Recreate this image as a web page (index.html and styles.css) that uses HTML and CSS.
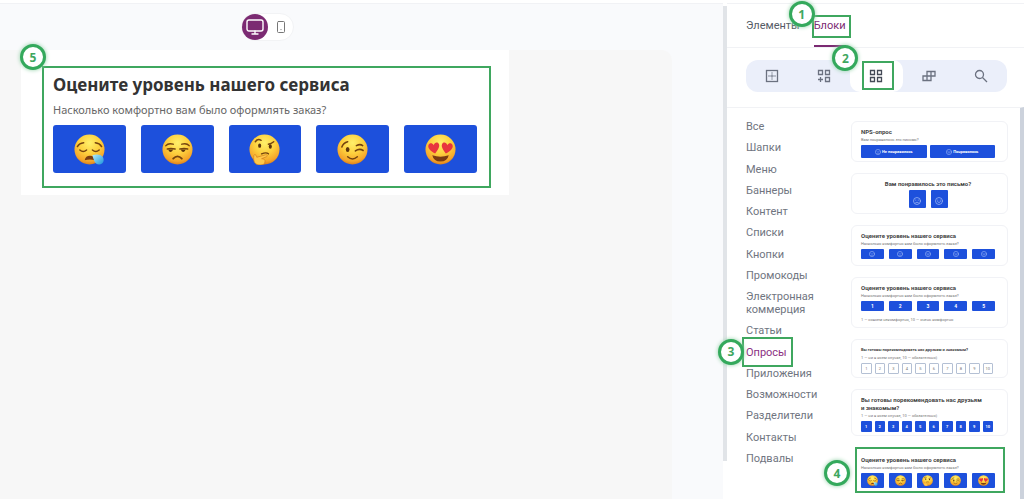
FILE: index.html
```html
<!DOCTYPE html>
<html lang="ru">
<head>
    <meta charset="UTF-8">
    <meta name="viewport" content="width=device-width, initial-scale=1.0">
    <title>Редактор писем</title>
    <link rel="stylesheet" href="styles.css">
</head>
<body>
    <svg class="sprite" width="0" height="0" aria-hidden="true">
        <defs>
            <radialGradient id="skin" cx="50%" cy="28%" r="72%">
                <stop offset="0" stop-color="#fff06a"/>
                <stop offset="0.5" stop-color="#fdcf3d"/>
                <stop offset="0.85" stop-color="#f5a52a"/>
                <stop offset="1" stop-color="#dc7f1c"/>
            </radialGradient>
            <linearGradient id="drop" x1="0" y1="0" x2="1" y2="1">
                <stop offset="0" stop-color="#b4ecfa"/>
                <stop offset="1" stop-color="#1b94dc"/>
            </linearGradient>
            <symbol id="sleepy" viewBox="0 0 32 32">
                <circle cx="16" cy="16" r="15.500" fill="url(#skin)"/>
                <g fill="none" stroke="#74430f" stroke-width="1.500" stroke-linecap="round">
                    <path d="M3.500 13q2-3.500 6.500-4M22 9q4.500.5 6.500 4"/>
                    <path d="M6 16.500q3.500 3 7 0M19 16.500q3.500 3 7 0"/>
                </g>
                <path d="M11 27q1-4.500 5.500-4.500t5 4.500q-5-1.500-10.500 0z" fill="#7a3c12"/>
                <path d="M19 22c4-1.500 8.500-1 10.500 1.500 2.500 3.500.5 8-3.500 8-4.500 0-5.500-4.500-7-9.500z" fill="url(#drop)"/>
            </symbol>
            <symbol id="unamused" viewBox="0 0 32 32">
                <circle cx="16" cy="16" r="15.500" fill="url(#skin)"/>
                <g fill="none" stroke="#74430f" stroke-width="1.500" stroke-linecap="round">
                    <path d="M4 12q2.500-3 7.500-1.500M20.500 10.500q5-1.500 7.500 1.500"/>
                    <path d="M5.500 15.500q3.500-1 8 0M18.500 15.500q4.500-1 8 0"/>
                    <path d="M11.500 25.500q4.500-5 9 0" stroke-width="1.800"/>
                </g>
                <path d="M6.500 16h5q-1 2.800-2.800 2.500T6.500 16zM19.500 16h5q-1 2.800-2.800 2.500T19.500 16z" fill="#5c340d"/>
            </symbol>
            <symbol id="thinking" viewBox="0 0 32 32">
                <circle cx="16" cy="16" r="15.500" fill="url(#skin)"/>
                <g fill="none" stroke="#74430f" stroke-width="1.500" stroke-linecap="round">
                    <path d="M6.500 8q2.500-3.500 6-1.500M20 10.500q3-.5 5.500-2.500"/>
                    <path d="M13 20.500q5-2 7 0"/>
                </g>
                <ellipse cx="11" cy="12" rx="1.600" ry="2.300" fill="#5c340d"/>
                <ellipse cx="22" cy="13" rx="1.600" ry="2.300" fill="#5c340d"/>
                <path d="M5 22c1-1.500 2.500-.5 3 2l9-2.500c2-.5 2.500 1.500 1 2l-5 2c2.500 0 4 1 3.500 3.500-.4 2-2 3-5 3-5 0-7.500-3-6.500-10z" fill="#ffc84a" stroke="#d58420" stroke-width="0.800"/>
            </symbol>
            <symbol id="wink" viewBox="0 0 32 32">
                <circle cx="16" cy="16" r="15.500" fill="url(#skin)"/>
                <g fill="none" stroke="#74430f" stroke-width="1.600" stroke-linecap="round">
                    <path d="M5 13.500q1.500-4.500 6-5.500M20 12q4-2 6.500 0"/>
                    <path d="M19 17.500q4-3 8-.5"/>
                    <path d="M11 23.500q5 4.500 10 0"/>
                </g>
                <ellipse cx="11" cy="16" rx="1.900" ry="2.700" fill="#5c340d"/>
            </symbol>
            <symbol id="love" viewBox="0 0 32 32">
                <circle cx="16" cy="16" r="15.500" fill="url(#skin)"/>
                <g fill="#e8353e">
                    <path d="M10.500 20C6 18 2.500 14.500 3.500 11.500c1-2.500 4-2.500 5.500 0 .8-3 4-3.500 5.300-1.200 1.400 2.700-1.300 6.700-3.800 9.700z"/>
                    <path d="M21.500 20c4.500-2 8-5.500 7-8.500-1-2.500-4-2.500-5.500 0-.8-3-4-3.500-5.300-1.200-1.400 2.700 1.300 6.700 3.800 9.700z"/>
                </g>
                <path d="M7.500 22q8.500 3 17 0-1.500 6.500-8.500 6.500T7.500 22z" fill="#7a3c12"/>
            </symbol>
            <symbol id="smile" viewBox="0 0 16 16">
                <g fill="none" stroke="#a9c0f7" stroke-width="1.400" stroke-linecap="round">
                    <circle cx="8" cy="8" r="7"/>
                    <path d="M5 9.500q3 4 6 0M5.500 6v.5M10.500 6v.5"/>
                </g>
            </symbol>
            <symbol id="sad" viewBox="0 0 16 16">
                <g fill="none" stroke="#a9c0f7" stroke-width="1.400" stroke-linecap="round">
                    <circle cx="8" cy="8" r="7"/>
                    <path d="M5 11.500q3-3 6 0M5.500 6v.5M10.500 6v.5"/>
                </g>
            </symbol>
        </defs>
    </svg>

    <div class="app">
        <main class="workspace">
            <div class="toolbar">
                <div class="devices">
                    <button class="device active" type="button" aria-label="Компьютер">
                        <svg width="18" height="18" viewBox="0 0 18 18" fill="none" stroke="currentColor" stroke-width="1.400" stroke-linecap="round" stroke-linejoin="round"><rect x="1" y="2" width="16" height="11" rx="2"/><path d="M9 13v3M6 16h6"/></svg>
                    </button>
                    <button class="device" type="button" aria-label="Телефон">
                        <svg width="12" height="12" viewBox="0 0 12 12" fill="none" stroke="currentColor" stroke-linecap="round"><rect x="2.500" y="0.500" width="7" height="11" rx="1"/><path d="M6 8.500v.2"/></svg>
                    </button>
                </div>
            </div>
            <div class="canvas">
                <section class="letter">
                    <div class="survey marked">
                        <span class="badge badge-5">5</span>
                        <h1>Оцените уровень нашего сервиса</h1>
                        <p>Насколько комфортно вам было оформлять заказ?</p>
                        <div class="rates">
                            <button type="button" aria-label="Ужасно"><svg><use href="#sleepy"/></svg></button>
                            <button type="button" aria-label="Плохо"><svg><use href="#unamused"/></svg></button>
                            <button type="button" aria-label="Нормально"><svg><use href="#thinking"/></svg></button>
                            <button type="button" aria-label="Хорошо"><svg><use href="#wink"/></svg></button>
                            <button type="button" aria-label="Отлично"><svg><use href="#love"/></svg></button>
                        </div>
                    </div>
                </section>
            </div>
        </main>
        <div class="scrollbar"></div>

        <aside class="sidebar">
            <nav class="tabs">
                <a href="#elements">Элементы</a>
                <a class="active" href="#blocks">Блоки<span class="mark"></span><span class="badge badge-1">1</span></a>
            </nav>
            <div class="kinds">
                <button type="button" aria-label="Структуры">
                    <svg viewBox="0 0 14 14"><rect x="1.500" y="1.500" width="11" height="11"/><path d="M7 3.500v7M3.500 7h7" stroke-dasharray="1 1"/></svg>
                </button>
                <button type="button" aria-label="Добавить блок">
                    <svg viewBox="0 0 14 14"><path d="M1.500 1.500h4v4h-4zM8.500 1.500h4v4h-4zM8.500 8.500h4v4h-4zM3.500 8v5M1 10.500h5"/></svg>
                </button>
                <button class="active" type="button" aria-label="Готовые блоки">
                    <svg viewBox="0 0 14 14"><path d="M1.500 1.500h4v4h-4zM8.500 1.500h4v4h-4zM8.500 8.500h4v4h-4zM1.500 8.500h4v4h-4z"/></svg>
                    <span class="mark"></span><span class="badge badge-2">2</span>
                </button>
                <button type="button" aria-label="Модули">
                    <svg viewBox="0 0 14 14"><path d="M5 2.500h8v4.500H5zM1 7h8v4.500H1zM9 2.500V7M5 7v4.500"/></svg>
                </button>
                <button type="button" aria-label="Поиск">
                    <svg viewBox="0 0 14 14"><circle cx="5.500" cy="5.500" r="4"/><path d="M8.500 8.500l4.500 4.500"/></svg>
                </button>
            </div>

            <div class="library">
                <nav class="categories">
                    <a href="#all">Все</a>
                    <a href="#headers">Шапки</a>
                    <a href="#menu">Меню</a>
                    <a href="#banners">Баннеры</a>
                    <a href="#content">Контент</a>
                    <a href="#lists">Списки</a>
                    <a href="#buttons">Кнопки</a>
                    <a href="#promo">Промокоды</a>
                    <a href="#shop">Электронная коммерция</a>
                    <a href="#articles">Статьи</a>
                    <a class="active" href="#surveys">Опросы<span class="mark"></span><span class="badge badge-3">3</span></a>
                    <a href="#apps">Приложения</a>
                    <a href="#features">Возможности</a>
                    <a href="#dividers">Разделители</a>
                    <a href="#contacts">Контакты</a>
                    <a href="#footers">Подвалы</a>
                </nav>

                <div class="previews">
                    <article class="preview tight">
                        <h2>NPS-опрос</h2>
                        <p>Вам понравилось это письмо?</p>
                        <div class="row tall">
                            <button type="button"><svg><use href="#sad"/></svg>Не понравилось</button>
                            <button type="button"><svg><use href="#smile"/></svg>Понравилось</button>
                        </div>
                    </article>
                    <article class="preview centered">
                        <h2>Вам понравилось это письмо?</h2>
                        <div class="row pair">
                            <button type="button" aria-label="Нет"><svg><use href="#sad"/></svg></button>
                            <button type="button" aria-label="Да"><svg><use href="#smile"/></svg></button>
                        </div>
                    </article>
                    <article class="preview">
                        <h2>Оцените уровень нашего сервиса</h2>
                        <p>Насколько комфортно вам было оформлять заказ?</p>
                        <div class="row five">
                            <button type="button" aria-label="1"><svg><use href="#sad"/></svg></button>
                            <button type="button" aria-label="2"><svg><use href="#sad"/></svg></button>
                            <button type="button" aria-label="3"><svg><use href="#smile"/></svg></button>
                            <button type="button" aria-label="4"><svg><use href="#smile"/></svg></button>
                            <button type="button" aria-label="5"><svg><use href="#smile"/></svg></button>
                        </div>
                    </article>
                    <article class="preview tight">
                        <h2>Оцените уровень нашего сервиса</h2>
                        <p>Насколько комфортно вам было оформлять заказ?</p>
                        <div class="row five">
                            <button type="button">1</button>
                            <button type="button">2</button>
                            <button type="button">3</button>
                            <button type="button">4</button>
                            <button type="button">5</button>
                        </div>
                        <p class="note">1 — совсем некомфортно, 10 — очень комфортно</p>
                    </article>
                    <article class="preview small tight">
                        <h2>Вы готовы порекомендовать нас друзьям и знакомым?</h2>
                        <p>1 — ни в коем случае, 10 — обязательно)</p>
                        <div class="row ten light">
                            <button type="button">1</button>
                            <button type="button">2</button>
                            <button type="button">3</button>
                            <button type="button">4</button>
                            <button type="button">5</button>
                            <button type="button">6</button>
                            <button type="button">7</button>
                            <button type="button">8</button>
                            <button type="button">9</button>
                            <button type="button">10</button>
                        </div>
                    </article>
                    <article class="preview tight">
                        <h2>Вы готовы порекомендовать нас друзьям<br>и знакомым?</h2>
                        <p>1 — ни в коем случае, 10 — обязательно)</p>
                        <div class="row ten">
                            <button type="button">1</button>
                            <button type="button">2</button>
                            <button type="button">3</button>
                            <button type="button">4</button>
                            <button type="button">5</button>
                            <button type="button">6</button>
                            <button type="button">7</button>
                            <button type="button">8</button>
                            <button type="button">9</button>
                            <button type="button">10</button>
                        </div>
                    </article>
                    <article class="preview chosen">
                        <span class="mark"></span><span class="badge badge-4">4</span>
                        <h2>Оцените уровень нашего сервиса</h2>
                        <p>Насколько комфортно вам было оформлять заказ?</p>
                        <div class="row five emoji">
                            <button type="button" aria-label="Ужасно"><svg><use href="#sleepy"/></svg></button>
                            <button type="button" aria-label="Плохо"><svg><use href="#unamused"/></svg></button>
                            <button type="button" aria-label="Нормально"><svg><use href="#thinking"/></svg></button>
                            <button type="button" aria-label="Хорошо"><svg><use href="#wink"/></svg></button>
                            <button type="button" aria-label="Отлично"><svg><use href="#love"/></svg></button>
                        </div>
                    </article>
                </div>
            </div>
        </aside>
    </div>
</body>
</html>
```
FILE: styles.css
```css
* {
    box-sizing: border-box;
}
body {
    margin: 0;
    font-family: Roboto, "Liberation Sans", sans-serif;
    background-color: #fff;
}
h1, h2, p {
    margin: 0;
}
a {
    color: inherit;
    text-decoration: none;
}
button {
    padding: 0;
    border: none;
    font-family: inherit;
    cursor: pointer;
}
.sprite {
    display: block;
}
.app {
    display: flex;
    min-height: 100vh;
    padding-top: 3px;
}

/* left part */
.workspace {
    flex: 1;
    display: flex;
    flex-direction: column;
    background-color: #f9fafc;
    border-top: 1px solid #f1f2f5;
}
.scrollbar {
    width: 4px;
    margin: 3px 0 38px;
    background-color: #e1e4e8;
}
.toolbar {
    display: flex;
    justify-content: center;
    padding: 9px 0;
    padding-right: 188px;
}
.devices {
    display: flex;
    align-items: center;
    background-color: #fff;
    border: 1px solid #f2f3f5;
    border-radius: 14px;
}
.device {
    display: flex;
    align-items: center;
    justify-content: center;
    width: 25px;
    height: 26px;
    border-radius: 50%;
    background-color: transparent;
    color: #777;
}
.device.active {
    width: 26px;
    background-color: #7b2a72;
    color: #fff;
}
.canvas {
    flex: 1;
    margin-right: 51px;
    padding-left: 21px;
    background-color: #f7f7f7;
    border-radius: 0 10px 0 0;
}
.letter {
    max-width: 488px;
    padding: 16px 18px 7px 21px;
    background-color: #fff;
}
.survey {
    padding: 4px 12px 13px 9px;
    font-family: "Noto Sans", "Open Sans", sans-serif;
}
.survey h1 {
    font-size: 17px;
    line-height: 26px;
    color: #333;
}
.survey p {
    margin-bottom: 4px;
    font-size: 11px;
    line-height: 23px;
    color: #666;
}
.rates {
    display: grid;
    grid-template-columns: repeat(5, 1fr);
    gap: 15px;
}
.rates button {
    display: flex;
    align-items: center;
    justify-content: center;
    height: 48px;
    border-radius: 3px;
    background-color: #1d50dc;
}
.rates svg {
    width: 31px;
    height: 31px;
}

/* green marks with numbers */
.marked {
    position: relative;
    border: 2px solid #3fa75f;
}
.mark {
    position: absolute;
    border: 2px solid #3fa75f;
}
.badge {
    position: absolute;
    z-index: 2;
    display: flex;
    align-items: center;
    justify-content: center;
    width: 26px;
    height: 26px;
    border: 3px solid #34a95c;
    border-radius: 50%;
    background-color: #fff;
    box-shadow: 0 0 4px #8fd0a4;
    color: #3fa75f;
    font: bold 12px "Open Sans", sans-serif;
}
.badge-1 {
    top: -3px;
    left: -25px;
}
.badge-2 {
    top: -15px;
    left: -18px;
}
.badge-3 {
    top: -7px;
    left: -28px;
}
.badge-4 {
    top: 12px;
    left: -28px;
}
.badge-5 {
    top: -24px;
    left: -24px;
}

/* right panel */
.sidebar {
    flex: 0 0 297px;
    display: flex;
    flex-direction: column;
    border-top: 1px solid #f1f2f5;
}
.tabs {
    display: flex;
    gap: 14px;
    padding: 0 19px;
    border-bottom: 1px solid #f1f2f5;
    font-size: 11px;
    color: #555b66;
}
.tabs a {
    position: relative;
    padding: 14px 0 11px;
    line-height: 16px;
    border-bottom: 2px solid transparent;
}
.tabs .active {
    color: #7b2a72;
    border-bottom-color: #7b2a72;
}
.tabs .mark {
    top: 11px;
    right: -5px;
    bottom: 7px;
    left: -2px;
}
.kinds {
    display: grid;
    grid-template-columns: repeat(5, 1fr);
    margin: 12px 17px 15px 19px;
    border-radius: 12px;
    background-color: #ebeffa;
}
.kinds button {
    position: relative;
    display: flex;
    align-items: center;
    justify-content: center;
    height: 32px;
    border-radius: 10px;
    background-color: transparent;
    color: #6b7180;
}
.kinds .active {
    background-color: #fff;
    color: #444a56;
}
.kinds svg {
    width: 14px;
    height: 14px;
    fill: none;
    stroke: currentColor;
    stroke-width: 1.3;
}
.kinds .mark {
    top: 1px;
    right: 9px;
    bottom: 2px;
    left: 12px;
}
.library {
    flex: 1;
    display: flex;
    justify-content: space-between;
    padding: 12px 12px 5px 19px;
    border-top: 1px solid #f1f2f5;
    border-right: 4px solid #ccd2dc;
}
.categories {
    display: flex;
    flex-direction: column;
    justify-content: space-between;
    align-items: flex-start;
    width: 80px;
    padding-bottom: 29px;
    font-size: 11px;
    line-height: 13px;
    color: #70757f;
}
.categories a {
    position: relative;
}
.categories .active {
    color: #8b2f82;
}
.categories .mark {
    top: -9px;
    right: -6px;
    bottom: -8px;
    left: -4px;
}
.previews {
    display: flex;
    flex-direction: column;
    gap: 11px;
    width: 157px;
    padding-top: 1px;
}
.preview {
    position: relative;
    padding: 6px 12px 6px 9px;
    border: 1px solid #f1f2f6;
    border-radius: 6px;
}
.preview h2 {
    font-size: 6px;
    line-height: 8px;
    color: #444;
    white-space: nowrap;
}
.preview p {
    margin-bottom: 1px;
    font-size: 4px;
    line-height: 8px;
    color: #777;
    white-space: nowrap;
}
.preview .note {
    margin: 5px 0 0;
}
.small h2 {
    font-size: 4px;
}
.tight {
    padding-bottom: 3px;
}
.centered {
    padding-bottom: 5px;
}
.centered h2 {
    margin-bottom: 2px;
    text-align: center;
}
.row {
    display: grid;
    grid-auto-flow: column;
    grid-auto-columns: 1fr;
    gap: 3px;
}
.row button {
    display: flex;
    align-items: center;
    justify-content: center;
    gap: 1px;
    height: 10px;
    border-radius: 1px;
    background-color: #1d50dc;
    color: #fff;
    font-size: 4px;
    font-weight: bold;
}
.row svg {
    width: 6px;
    height: 6px;
}
.row.tall button {
    height: 13px;
}
.pair {
    grid-auto-columns: 17px;
    justify-content: center;
    gap: 5px;
}
.row.pair button {
    height: 18px;
    padding-top: 4px;
}
.pair svg {
    width: 8px;
    height: 8px;
}
.five {
    gap: 5px;
}
.five button {
    font-size: 5px;
}
.ten {
    padding-right: 2px;
}
.row.ten button {
    height: 11px;
}
.light button {
    border: 1px solid #b4c0d4;
    background-color: #fff;
    color: #777;
    font-weight: normal;
}
.chosen {
    padding-top: 8px;
    padding-bottom: 3px;
    border-color: transparent;
}
.chosen .mark {
    top: -1px;
    right: 2px;
    bottom: -2px;
    left: 3px;
}
.row.emoji button {
    height: 15px;
}
.emoji svg {
    width: 11px;
    height: 11px;
}
```
